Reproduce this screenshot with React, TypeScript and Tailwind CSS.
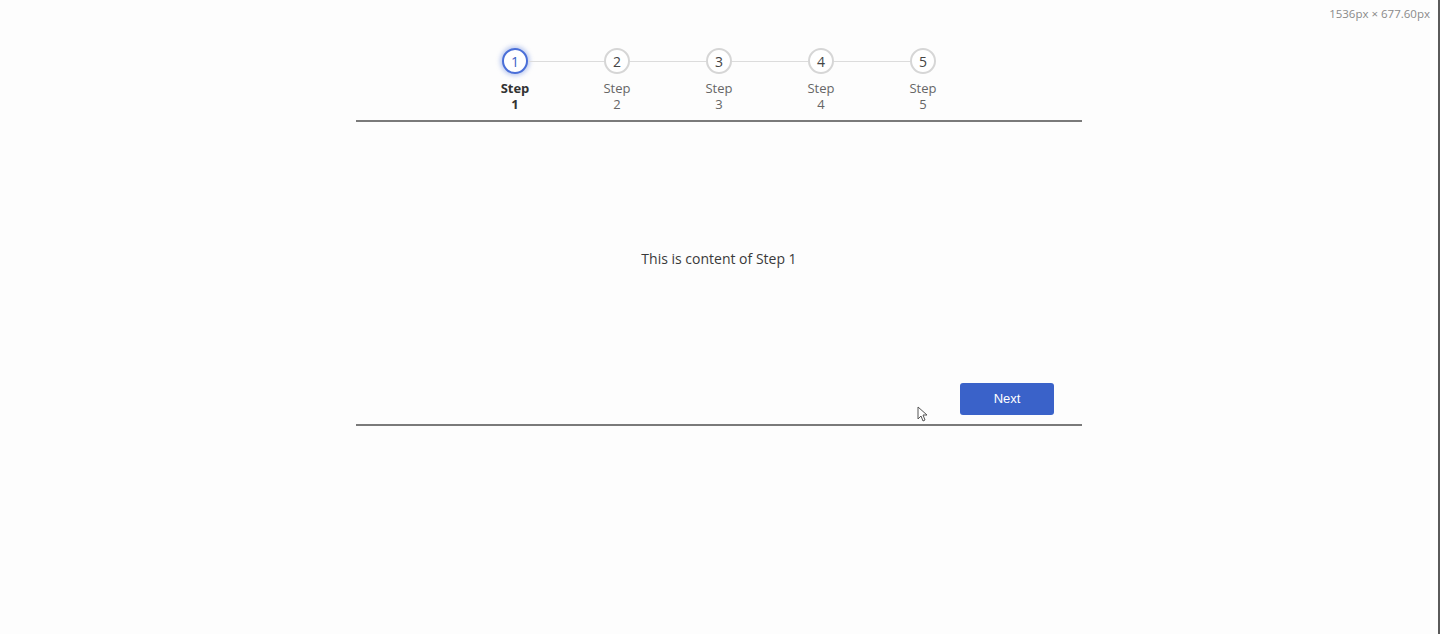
const steps = [1, 2, 3, 4, 5];

function StepItem({ n, active, first, last }: { n: number; active: boolean; first: boolean; last: boolean }) {
    return (
        <div className="flex w-[102px] flex-col items-center">
            <div className="flex w-full items-center">
                <div className={`h-px flex-1 ${first ? "" : "bg-[#dcdcdc]"}`} />
                <div
                    className={
                        active
                            ? "flex h-[26px] w-[26px] items-center justify-center rounded-full border-2 border-[#4a6fd8] bg-white text-[14px] text-[#3b5fc6] shadow-[0_0_4px_2px_rgba(74,111,216,0.35)]"
                            : "flex h-[26px] w-[26px] items-center justify-center rounded-full border-2 border-[#d6d6d6] bg-white text-[14px] text-[#444]"
                    }
                >
                    {n}
                </div>
                <div className={`h-px flex-1 ${last ? "" : "bg-[#dcdcdc]"}`} />
            </div>
            <div className={`mt-[6px] text-center text-[13px] leading-[16px] ${active ? "font-bold text-[#333]" : "text-[#666]"}`}>
                <div>Step</div>
                <div>{n}</div>
            </div>
        </div>
    );
}

export default function App() {
    return (
        <div className="relative flex h-[634px] flex-col border-r-2 border-[#5a5a5a] bg-[#fdfdfd] font-['Open_Sans',sans-serif]">
            <div className="absolute right-[8px] top-[5px] text-[11.5px] text-[#8a8a8a]">1536px × 677.60px</div>

            <div className="ml-[356px] w-[726px] pt-[48px]">
                <div className="flex justify-center">
                    {steps.map((n, i) => (
                        <StepItem key={n} n={n} active={n === 1} first={i === 0} last={i === steps.length - 1} />
                    ))}
                </div>

                <div className="mt-[8px] h-[2px] bg-[#7a7a7a]" />

                <div className="relative flex h-[302px] flex-col">
                    <p className="mt-[126px] text-center text-[14px] text-[#3a3a3a]">This is content of Step 1</p>
                    <button className="mb-[9px] mr-[28px] mt-auto h-[32px] w-[94px] self-end rounded-[3px] bg-[#3a62c9] font-['Liberation_Sans',sans-serif] text-[13px] text-white">
                        Next
                    </button>
                    <svg className="absolute left-[561px] top-[284px]" width="11" height="16" viewBox="0 0 11 16">
                        <path d="M1 1 L1 13 L4 10 L6 15 L8 14 L6 9 L10 9 Z" fill="#fff" stroke="#555" strokeWidth="1" strokeLinejoin="round" />
                    </svg>
                </div>

                <div className="h-[2px] bg-[#7a7a7a]" />
            </div>
        </div>
    );
}
